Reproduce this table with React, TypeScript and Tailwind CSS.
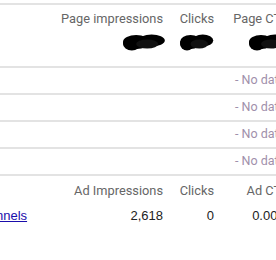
import type { ReactNode } from 'react'

const head = "font-['Roboto',sans-serif] text-[12.8px] leading-[15px] text-[#666]"
const cell = "font-['Liberation_Sans',Arial,sans-serif] text-[13px] leading-[15px] text-[#222]"

// scribbled-out numbers
function Blob({ w }: { w: number }) {
  return (
    <svg width={w} height="18" viewBox={`0 0 ${w} 18`}>
      <ellipse cx={w * 0.3} cy="9" rx={w * 0.3} ry="7" fill="#000" />
      <ellipse cx={w * 0.65} cy="7.5" rx={w * 0.3} ry="6" fill="#000" />
      <ellipse cx={w * 0.2} cy="11" rx={w * 0.2} ry="6.5" fill="#000" />
      <ellipse cx={w * 0.55} cy="11" rx={w * 0.25} ry="4.5" fill="#111" />
    </svg>
  )
}

function NoDataRow() {
  return (
    <div className="flex h-[27px] items-center border-b-2 border-[#e3e3e3]">
      <span className="pl-[235px] font-['Roboto',sans-serif] text-[12.5px] whitespace-nowrap text-[#9f90ab]">
        - No data
      </span>
    </div>
  )
}

function Cols({ a, b, c, className }: { a: ReactNode; b: ReactNode; c: ReactNode; className?: string }) {
  return (
    <div className={`flex ${className ?? ''}`}>
      <div className="w-[163px] shrink-0 text-right">{a}</div>
      <div className="w-[51px] shrink-0 text-right">{b}</div>
      <div className="w-[75px] shrink-0 text-right">{c}</div>
    </div>
  )
}

export default function App() {
  return (
    <div className="h-[260px] w-[276px] overflow-hidden bg-white">
      <div className="w-[320px] pt-[3px]">
        <div className="border-t-2 border-b-2 border-[#e3e3e3]">
          <div className="h-[61px] pt-[6px]">
            <Cols
              className={`${head} whitespace-nowrap`}
              a="Page impressions"
              b="Clicks"
              c="Page CTR"
            />
            <div className="mt-[7px] flex h-[18px]">
              <div className="flex w-[167px] shrink-0 justify-end">
                <Blob w={44} />
              </div>
              <div className="flex w-[48px] shrink-0 justify-end">
                <Blob w={35} />
              </div>
              <div className="w-[75px] shrink-0 pl-[34px]">
                <Blob w={40} />
              </div>
            </div>
          </div>
        </div>
        <NoDataRow />
        <NoDataRow />
        <NoDataRow />
        <NoDataRow />
        <div className="pt-[7px]">
          <Cols className={`${head} whitespace-nowrap`} a="Ad Impressions" b="Clicks" c="Ad CTR" />
          <div className={`relative mt-[10px] ${cell}`}>
            <Cols a="2,618" b="0" c="0.00%" />
            <a href="#" className="absolute top-0 left-[-4px] text-[#1a0dab] underline">
              nnels
            </a>
          </div>
        </div>
      </div>
    </div>
  )
}
